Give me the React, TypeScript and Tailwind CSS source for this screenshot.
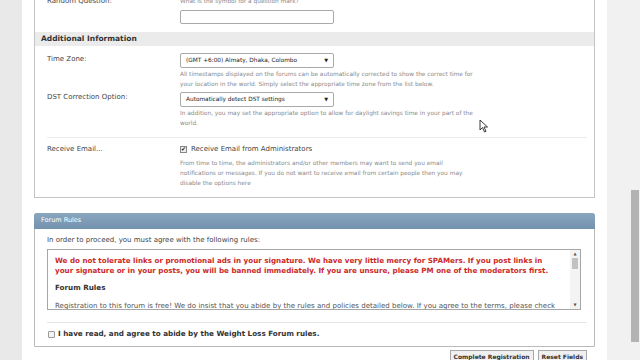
import React from "react";

const F = "font-['DejaVu_Sans',Verdana,sans-serif]";

function Select({ text }: { text: string }) {
  return (
    <div className="flex h-[15px] w-[154px] items-center justify-between rounded-[2px] border border-[#a9a9a9] bg-white pl-[5px] pr-[5px]">
      <span className="text-[5.8px] text-[#222]">{text}</span>
      <span className="text-[5px] text-[#222]">▼</span>
    </div>
  );
}

function Desc({ lines }: { lines: string[] }) {
  return (
    <div className="mt-[1px] flex flex-col text-[5.85px] leading-[10px] text-[#8a8a8a] whitespace-nowrap">
      {lines.map((l, i) => (
        <span key={i}>{l}</span>
      ))}
    </div>
  );
}

export default function App() {
  return (
    <div className={`relative flex h-[360px] w-[640px] overflow-hidden bg-white ${F}`}>
      <div className="w-[22px] shrink-0 bg-[#e9e9e9]" />
      <div className="flex w-[585px] shrink-0 flex-col">
        {/* top panel */}
        <div className="mx-[12px] -mt-[5px] flex h-[203px] shrink-0 flex-col border border-t-0 border-[#c4c4c4]">
          <div className="flex pl-[12px] pt-[1px]">
            <div className="w-[133px] text-[7px] leading-[10px] text-[#444]">Random Question:</div>
            <div className="flex flex-col">
              <div className="text-[5.85px] leading-[10px] text-[#8a8a8a]">What is the symbol for a question mark?</div>
              <div className="mt-[4px] h-[14px] w-[154px] rounded-[2px] border border-[#a9a9a9] bg-white" />
            </div>
          </div>
          <div className="mt-[8px] flex h-[14px] items-center bg-[#ebebeb] pl-[6px] text-[7.5px] font-bold text-[#333]">
            Additional Information
          </div>
          <div className="mt-[7px] flex pl-[12px]">
            <div className="w-[133px] pt-[1px] text-[7px] leading-[10px] text-[#444]">Time Zone:</div>
            <div className="flex flex-col">
              <Select text="(GMT +6:00) Almaty, Dhaka, Colombo" />
              <Desc
                lines={[
                  "All timestamps displayed on the forums can be automatically corrected to show the correct time for",
                  "your location in the world. Simply select the appropriate time zone from the list below.",
                ]}
              />
            </div>
          </div>
          <div className="mt-[3px] flex pl-[12px]">
            <div className="w-[133px] pt-[0px] text-[7px] leading-[10px] text-[#444]">DST Correction Option:</div>
            <div className="flex flex-col">
              <Select text="Automatically detect DST settings" />
              <Desc
                lines={[
                  "In addition, you may set the appropriate option to allow for daylight savings time in your part of the",
                  "world.",
                ]}
              />
            </div>
          </div>
          <div className="ml-[12px] mr-[7px] mt-[9px] h-px bg-[#ececec]" />
          <div className="mt-[6px] flex pl-[12px]">
            <div className="w-[133px] text-[7px] leading-[10px] text-[#444]">Receive Email...</div>
            <div className="flex flex-col">
              <div className="flex items-center gap-[4px] text-[7px] leading-[10px] text-[#444]">
                <span className="flex h-[7px] w-[7px] items-center justify-center border border-[#888] bg-[#eee] text-[6px] leading-none text-[#222]">✔</span>
                Receive Email from Administrators
              </div>
              <div className="mt-[3px]">
                <Desc
                  lines={[
                    "From time to time, the administrators and/or other members may want to send you email",
                    "notifications or messages. If you do not want to receive email from certain people then you may",
                    "disable the options here",
                  ]}
                />
              </div>
            </div>
          </div>
        </div>

        {/* forum rules panel */}
        <div className="mx-[12px] mt-[15px] flex h-[134px] shrink-0 flex-col rounded-t-[3px] border border-[#b9b9b9]">
          <div className="-mx-px -mt-px flex h-[16px] shrink-0 items-center rounded-t-[3px] bg-gradient-to-b from-[#8aa6bf] to-[#7392ae] pl-[7px] text-[6.5px] text-white">
            Forum Rules
          </div>
          <div className="mt-[6px] pl-[12px] text-[7px] leading-[10px] text-[#444]">
            In order to proceed, you must agree with the following rules:
          </div>
          <div className="ml-[12px] mt-[4px] flex h-[61px] w-[534px] shrink-0 overflow-hidden border border-[#a6a6a6] bg-white">
            <div className="flex flex-1 flex-col overflow-hidden pl-[7px] pt-[6px] whitespace-nowrap">
              <span className="text-[7.15px] font-bold leading-[10px] text-[#cc2a2a]">
                We do not tolerate links or promotional ads in your signature. We have very little mercy for SPAMers. If you post links in
              </span>
              <span className="text-[7.15px] font-bold leading-[10px] text-[#cc2a2a]">
                your signature or in your posts, you will be banned immediately. If you are unsure, please PM one of the moderators first.
              </span>
              <span className="mt-[7px] text-[7.2px] font-bold leading-[10px] text-[#333]">Forum Rules</span>
              <span className="mt-[8px] text-[7.05px] leading-[10px] text-[#555]">
                Registration to this forum is free! We do insist that you abide by the rules and policies detailed below. If you agree to the terms, please check
              </span>
            </div>
            <div className="flex w-[10px] flex-col items-center bg-[#f4f4f4] py-[1px]">
              <span className="text-[4px] leading-[6px] text-[#555]">▲</span>
              <div className="mt-[1px] h-[11px] w-[6px] bg-[#c2c2c2]" />
              <div className="flex-1" />
              <span className="text-[4px] leading-[6px] text-[#555]">▼</span>
            </div>
          </div>
          <div className="ml-[12px] mr-[7px] mt-[12px] h-px bg-[#e6e6e6]" />
          <div className="mt-[6px] flex items-center gap-[3px] pl-[13px]">
            <span className="h-[7px] w-[7px] rounded-[1px] border border-[#9a9a9a] bg-[#f4f4f4]" />
            <span className="text-[7.2px] font-bold leading-[10px] text-[#333]">
              I have read, and agree to abide by the Weight Loss Forum rules.
            </span>
          </div>
        </div>
        <div className="mr-[20px] mt-[3px] flex shrink-0 justify-end gap-[4px]">
          <div className="h-[14px] border border-[#a8a8a8] bg-[#f0f0f0] px-[3px] text-[6px] font-bold leading-[12px] text-[#333]">
            Complete Registration
          </div>
          <div className="h-[14px] border border-[#a8a8a8] bg-[#f0f0f0] px-[3px] text-[6px] font-bold leading-[12px] text-[#333]">
            Reset Fields
          </div>
        </div>
      </div>
      <div className="flex flex-1 bg-[#f1f1f1]">
        <div className="flex-1" />
        <div className="mt-[190px] h-[152px] w-[8px] bg-[#b3b3b3]" />
        <div className="w-[1px]" />
      </div>
      <svg className="pointer-events-none absolute left-[479px] top-[119px]" width="10" height="14" viewBox="0 0 10 14">
        <path d="M1 1 L1 11 L3.5 8.5 L5.5 13 L7 12.3 L5 8 L8.5 8 Z" fill="white" stroke="#222" strokeWidth="0.9" />
      </svg>
    </div>
  );
}
